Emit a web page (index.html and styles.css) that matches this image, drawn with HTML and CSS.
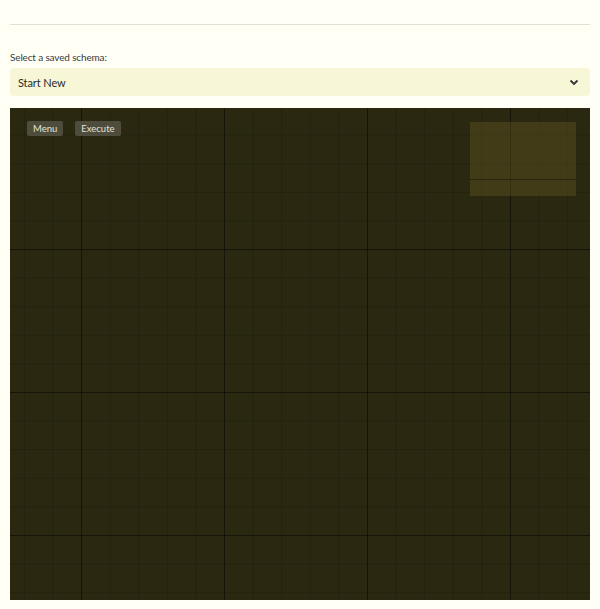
FILE: index.html
```html
<!DOCTYPE html>
<html>
<head>
<meta charset="utf-8">
<link rel="stylesheet" href="styles.css">
</head>
<body>
<div class="page">
  <hr class="rule">
  <label class="label" for="schema">Select a saved schema:</label>
  <div class="select-wrap">
    <select id="schema" class="select">
      <option>Start New</option>
    </select>
    <svg class="chev" width="10" height="7" viewBox="0 0 10 7"><path d="M1.5 1.5 L5 5 L8.5 1.5" fill="none" stroke="#333" stroke-width="1.8"/></svg>
  </div>
  <div class="canvas">
    <div class="toolbar">
      <button class="btn">Menu</button>
      <button class="btn">Execute</button>
    </div>
    <div class="minimap"><div class="minimap-line"></div></div>
  </div>
</div>
</body>
</html>
```
FILE: styles.css
```css
html, body {
  margin: 0;
  padding: 0;
  background: #fffff6;
  font-family: "Lato", "Open Sans", sans-serif;
}
.page {
  padding: 0 10px;
  display: flex;
  flex-direction: column;
}
.rule {
  margin: 24px 0 0;
  border: 0;
  border-top: 1px solid #e2e0d0;
  height: 0;
}
.label {
  margin-top: 25px;
  font-size: 10px;
  letter-spacing: -0.15px;
  color: #3a3a3a;
  line-height: 14px;
}
.select-wrap {
  position: relative;
  margin-top: 4px;
}
.select {
  width: 100%;
  height: 28px;
  -webkit-appearance: none;
  appearance: none;
  border: 0;
  border-radius: 4px;
  background: #f7f6d6;
  padding: 0 8px;
  font-family: "Lato", "Open Sans", sans-serif;
  font-size: 11px;
  letter-spacing: -0.1px;
  color: #2b2b2b;
}
.chev {
  position: absolute;
  right: 11px;
  top: 11px;
}
.canvas {
  position: relative;
  margin-top: 12px;
  height: 492px;
  background-color: #2a2810;
  background-image:
    linear-gradient(to right, rgba(0,0,0,0.4) 1px, transparent 1px),
    linear-gradient(to bottom, rgba(0,0,0,0.4) 1px, transparent 1px),
    linear-gradient(to right, rgba(0,0,0,0.14) 1px, transparent 1px),
    linear-gradient(to bottom, rgba(0,0,0,0.14) 1px, transparent 1px);
  background-size: 143px 143px, 143px 143px, 28.6px 28.6px, 28.6px 28.6px;
  background-position: 71px 141px, 71px 141px, 71px 141px, 71px 141px;
}
.toolbar {
  position: absolute;
  left: 17px;
  top: 13px;
  display: flex;
  gap: 12px;
}
.btn {
  background: #4e4c3c;
  color: #e4e2d6;
  border: 0;
  border-radius: 2px;
  font-family: "Lato", "Open Sans", sans-serif;
  font-size: 9.5px;
  height: 15px;
  line-height: 15px;
  padding: 0 6px;
}
.minimap {
  position: absolute;
  left: 460px;
  top: 14px;
  width: 106px;
  height: 74px;
  background: rgba(100, 90, 35, 0.4);
}
.minimap-line {
  position: absolute;
  left: 0;
  right: 0;
  top: 57px;
  height: 1px;
  background: rgba(30, 20, 10, 0.6);
}
```
